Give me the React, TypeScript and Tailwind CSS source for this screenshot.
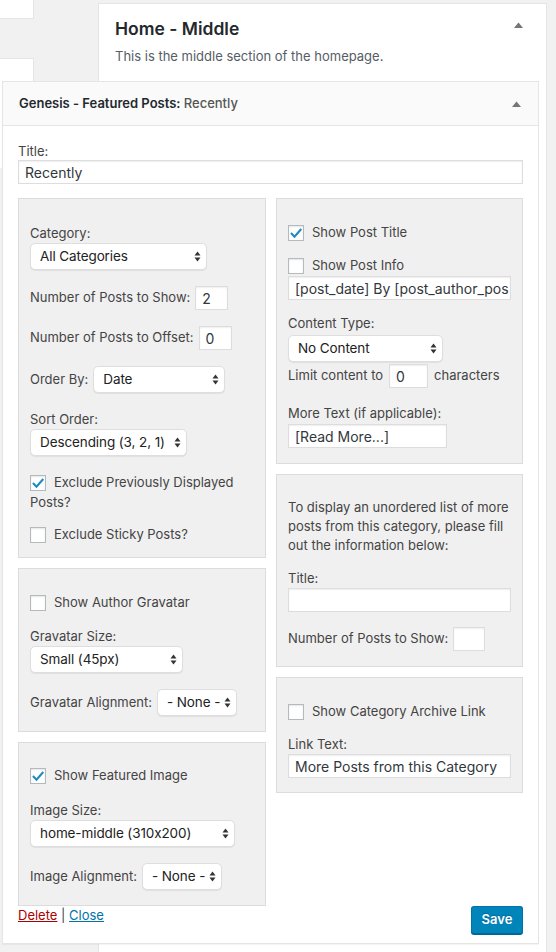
import type { ReactNode } from 'react';

function Arrows() {
  return (
    <svg width="7" height="11" viewBox="0 0 7 11" className="shrink-0">
      <path d="M0.5 4.5 L3.5 0.5 L6.5 4.5 Z" fill="#333" />
      <path d="M0.5 6.5 L6.5 6.5 L3.5 10.5 Z" fill="#333" />
    </svg>
  );
}

function Caret() {
  return (
    <svg width="9" height="6" viewBox="0 0 9 6">
      <path d="M0 6 L4.5 0.5 L9 6 Z" fill="#72777c" />
    </svg>
  );
}

function Select({ value, w }: { value: string; w: string }) {
  return (
    <div
      className={`${w} h-[27px] shrink-0 flex items-center justify-between gap-[3px] pl-[9px] pr-[5px] bg-white rounded-[5px] border border-[#dedede] shadow-[0_1px_1px_rgba(0,0,0,0.07)] text-[13.5px] tracking-[-0.1px] text-[#222]`}
    >
      <span className="whitespace-nowrap">{value}</span>
      <Arrows />
    </div>
  );
}

function Field({ value = '', w = 'w-full' }: { value?: string; w?: string }) {
  return (
    <div
      className={`${w} h-[24px] shrink-0 flex items-center pl-[6px] bg-white border border-[#ddd] shadow-[inset_0_1px_2px_rgba(0,0,0,0.07)] text-[14px] text-[#32373c] whitespace-nowrap overflow-hidden`}
    >
      {value}
    </div>
  );
}

function Check({ on = false }: { on?: boolean }) {
  return (
    <span className="inline-flex w-[16px] h-[16px] shrink-0 items-center justify-center align-middle bg-white border border-[#b4b9be] shadow-[inset_0_1px_2px_rgba(0,0,0,0.1)]">
      {on && (
        <svg width="16" height="16" viewBox="0 0 16 16">
          <path d="M2.2 8 L6.3 12.2 L14 3.4" fill="none" stroke="#1e8cbe" strokeWidth="2.4" />
        </svg>
      )}
    </span>
  );
}

function CheckRow({ on, children, className = '' }: { on?: boolean; children: ReactNode; className?: string }) {
  return (
    <div className={`flex items-center gap-[8px] h-[20px] ${className}`}>
      <Check on={on} />
      <span>{children}</span>
    </div>
  );
}

function Label({ children, className = '' }: { children: ReactNode; className?: string }) {
  return <div className={`h-[18px] leading-[18px] ${className}`}>{children}</div>;
}

function Row({ children, className = '' }: { children: ReactNode; className?: string }) {
  return <div className={`flex items-center gap-[5px] ${className}`}>{children}</div>;
}

function Box({ children, className = '' }: { children: ReactNode; className?: string }) {
  return (
    <div className={`border border-[#dcdcdc] bg-[#f0f0f0] px-[11px] ${className}`}>{children}</div>
  );
}

export default function App() {
  return (
    <div className="relative w-[556px] h-[952px] overflow-hidden bg-[#f1f1f1] flex font-[family-name:Inter,'Noto_Sans',sans-serif] [font-feature-settings:'calt'_0] text-[13px] text-[#444]">
      {/* widget list column on the left, mostly hidden */}
      <div className="w-[34px] shrink-0 flex flex-col">
        <div className="h-[19px] bg-white border-r border-b border-[#e5e5e5]" />
        <div className="mt-[39px] h-[110px] bg-white border-r border-t border-[#e5e5e5]" />
      </div>

      {/* sidebar panel */}
      <div className="ml-[64px] mt-[3px] w-[449px] bg-white border border-b-0 border-[#e5e5e5]">
        <div className="flex items-center justify-between pl-[16px] pr-[23px] pt-[13px]">
          <h2 className="h-[24px] leading-[24px] text-[17.5px] font-semibold text-[#23282d]">Home - Middle</h2>
          <div className="-mt-[8px]">
            <Caret />
          </div>
        </div>
        <p className="mt-[6px] pl-[16px] h-[18px] leading-[18px] text-[#555d66]">
          This is the middle section of the homepage.
        </p>
      </div>

      {/* dragged widget */}
      <div className="absolute left-[2px] top-[81px] w-[537px] h-[863px] bg-white border border-[#e5e5e5] shadow-[0_1px_1px_rgba(0,0,0,0.04)] flex flex-col">
        <div className="h-[44px] shrink-0 flex items-center justify-between bg-[#fafafa] border-b border-[#e5e5e5] pl-[16px] pr-[17px]">
          <h3 className="text-[13px] font-semibold text-[#23282d]">
            Genesis - Featured Posts: <span className="font-medium text-[#555]">Recently</span>
          </h3>
          <Caret />
        </div>

        <div className="px-[15px] pt-[16px] flex flex-col">
          <Label>Title:</Label>
          <Field value="Recently" />

          <div className="mt-[14px] flex items-start gap-[10px]">
            {/* left column */}
            <div className="w-[248px] flex flex-col gap-[10px]">
              <Box className="pt-[25px] pb-[12px]">
                <Label>Category:</Label>
                <Select value="All Categories" w="w-[177px] mt-[1px]" />
                <Row className="mt-[16px]">
                  <span>Number of Posts to Show:</span>
                  <Field value="2" w="w-[33px]" />
                </Row>
                <Row className="mt-[16px]">
                  <span>Number of Posts to Offset:</span>
                  <Field value="0" w="w-[33px]" />
                </Row>
                <Row className="mt-[16px]">
                  <span>Order By:</span>
                  <Select value="Date" w="w-[132px]" />
                </Row>
                <Label className="mt-[17px]">Sort Order:</Label>
                <Select value="Descending (3, 2, 1)" w="w-[157px] mt-[1px]" />
                <div className="mt-[16px] leading-[20px]">
                  <span className="inline-block mr-[8px] -mt-[3px] align-middle">
                    <Check on />
                  </span>
                  Exclude Previously Displayed
                  <br />
                  Posts?
                </div>
                <CheckRow className="mt-[13px]">Exclude Sticky Posts?</CheckRow>
              </Box>

              <Box className="pt-[24px] pb-[15px]">
                <CheckRow>Show Author Gravatar</CheckRow>
                <Label className="mt-[14px]">Gravatar Size:</Label>
                <Select value="Small (45px)" w="w-[153px] mt-[1px]" />
                <Row className="mt-[16px]">
                  <span>Gravatar Alignment:</span>
                  <Select value="- None -" w="w-[80px]" />
                </Row>
              </Box>

              <Box className="pt-[23px] pb-[15px]">
                <CheckRow on>Show Featured Image</CheckRow>
                <Label className="mt-[15px]">Image Size:</Label>
                <Select value="home-middle (310x200)" w="w-[205px] mt-[1px]" />
                <Row className="mt-[16px]">
                  <span>Image Alignment:</span>
                  <Select value="- None -" w="w-[80px]" />
                </Row>
              </Box>
            </div>

            {/* right column */}
            <div className="w-[247px] flex flex-col gap-[10px]">
              <Box className="pt-[24px] pb-[15px]">
                <CheckRow on>Show Post Title</CheckRow>
                <CheckRow className="mt-[13px]">Show Post Info</CheckRow>
                <Field value="[post_date] By [post_author_pos" />
                <Label className="mt-[14px]">Content Type:</Label>
                <Select value="No Content" w="w-[155px] mt-[3px]" />
                <div className="mt-[2px] flex items-center gap-[6px]">
                  <span>Limit content to</span>
                  <Field value="0" w="w-[39px]" />
                  <span>characters</span>
                </div>
                <Label className="mt-[16px]">More Text (if applicable):</Label>
                <div className="mt-[2px]">
                  <Field value="[Read More...]" w="w-[159px]" />
                </div>
              </Box>

              <Box className="pt-[23px] pb-[15px]">
                <p className="leading-[19px] whitespace-nowrap">
                  To display an unordered list of more
                  <br />
                  posts from this category, please fill
                  <br />
                  out the information below:
                </p>
                <Label className="mt-[14px]">Title:</Label>
                <div className="mt-[1px]">
                  <Field />
                </div>
                <Row className="mt-[15px]">
                  <span>Number of Posts to Show:</span>
                  <Field w="w-[32px]" />
                </Row>
              </Box>

              <Box className="pt-[24px] pb-[14px]">
                <CheckRow>Show Category Archive Link</CheckRow>
                <Label className="mt-[13px]">Link Text:</Label>
                <div className="mt-[1px]">
                  <Field value="More Posts from this Category" />
                </div>
              </Box>
            </div>
          </div>

          <div className="flex items-start justify-between">
            <div className="h-[18px] leading-[18px]">
              <a className="text-[#a00] underline">Delete</a>
              <span className="text-[#444]"> | </span>
              <a className="text-[#0073aa] underline">Close</a>
            </div>
            <button className="w-[52px] h-[28px] rounded-[3px] bg-[#0085ba] border border-[#0073aa] border-b-[#006799] shadow-[0_1px_0_#006799] text-white text-[13px] font-semibold [text-shadow:0_-1px_1px_#006799]">
              Save
            </button>
          </div>
        </div>
      </div>
    </div>
  );
}
